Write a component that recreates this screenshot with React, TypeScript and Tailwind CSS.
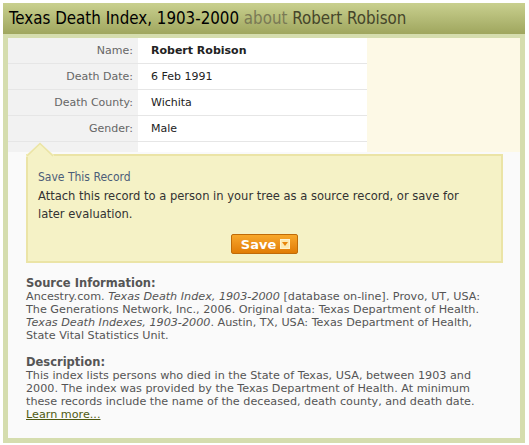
import React from "react";

const verdana = { fontFamily: '"DejaVu Sans", Verdana, sans-serif' };
const tahoma = { fontFamily: '"DejaVu Sans Condensed", Tahoma, "DejaVu Sans", sans-serif' };

function Row({ label, value, bold }: { label: string; value: string; bold?: boolean }) {
  return (
    <div className="flex h-[26px] border-b border-[#e6e6e6]">
      <div className="w-[130px] bg-[#f2f2f2] text-right pr-[5px] text-[#666] leading-[26px]">{label}</div>
      <div className={`w-[229px] bg-white pl-[13px] leading-[26px] text-[#222] ${bold ? "font-bold" : ""}`}>{value}</div>
    </div>
  );
}

export default function App() {
  return (
    <div className="w-[529px] h-[445px] bg-white pt-[3px] pl-[3px]">
      <div className="w-[522px] h-[440px] flex flex-col">
        <div
          className="h-[31px] bg-gradient-to-b from-[#c9d08f] to-[#9fa65e] pl-[6px] text-[16.8px] leading-[31px] whitespace-nowrap"
          style={tahoma}
        >
          <span className="text-black">Texas Death Index, 1903-2000</span>{" "}
          <span className="text-[#7a7a55]">about</span>{" "}
          <span className="text-[#45452a]">Robert Robison</span>
        </div>
        <div className="flex-1 border-x-[5px] border-b-[5px] border-t-[4px] border-[#d5ddae] bg-[#fafafa] text-[11px]" style={verdana}>
          <div className="flex bg-[#fdf9e6]">
            <div className="flex flex-col">
              <Row label="Name:" value="Robert Robison" bold />
              <Row label="Death Date:" value="6 Feb 1991" />
              <Row label="Death County:" value="Wichita" />
              <Row label="Gender:" value="Male" />
              <div className="flex h-[10px]">
                <div className="w-[130px] bg-[#f2f2f2]" />
                <div className="w-[229px] bg-white" />
              </div>
            </div>
          </div>
          <div className="relative ml-[18px] mt-[2px] w-[477px] h-[109px] border-2 border-[#ebe4a6] bg-[#f5f2c6] px-[10px] pt-[12px]">
            <svg className="absolute left-[-2px] top-[-14px]" width="30" height="15" viewBox="0 0 30 15">
              <path d="M0 15 L0 13 L14 1 L28 13 L28 15 Z" fill="#f5f2c6" />
              <path d="M1 14 L14 1.5 L27 14" fill="none" stroke="#ebe4a6" strokeWidth="1.5" />
            </svg>
            <div className="text-[12px] text-[#4c5d78] leading-[18px]" style={tahoma}>Save This Record</div>
            <div className="text-[12.8px] text-[#333] leading-[18px] mt-[1px] whitespace-nowrap" style={tahoma}>
              Attach this record to a person in your tree as a source record, or save for
              <br />
              later evaluation.
            </div>
            <div className="flex justify-center mt-[11px]">
              <button className="w-[67px] h-[20px] rounded-[2px] border border-[#c06b08] bg-gradient-to-b from-[#f8a82a] to-[#e17c02] text-white font-bold text-[13px] flex items-center justify-center gap-[4px] pl-[2px]" style={verdana}>
                <span className="leading-none">Save</span>
                <span className="w-[10px] h-[10px] bg-[#fde9b0] border border-[#fff3cf] flex items-center justify-center">
                  <svg width="6" height="4" viewBox="0 0 6 4"><path d="M0 0 L6 0 L3 4 Z" fill="#e8860c" /></svg>
                </span>
              </button>
            </div>
          </div>
          <div className="px-[18px] pt-[14px] text-[#555] leading-[13px] text-[11.2px] whitespace-nowrap">
            <div className="font-bold text-[11.5px]">Source Information:</div>
            <div>
              Ancestry.com. <i>Texas Death Index, 1903-2000</i> [database on-line]. Provo, UT, USA:
              <br />
              The Generations Network, Inc., 2006. Original data: Texas Department of Health.
              <br />
              <i>Texas Death Indexes, 1903-2000</i>. Austin, TX, USA: Texas Department of Health,
              <br />
              State Vital Statistics Unit.
            </div>
            <div className="font-bold text-[11.5px] mt-[14px]">Description:</div>
            <div>
              This index lists persons who died in the State of Texas, USA, between 1903 and
              <br />
              2000. The index was provided by the Texas Department of Health. At minimum
              <br />
              these records include the name of the deceased, death county, and death date.
            </div>
            <a className="text-[#4f5a12] underline">Learn more...</a>
          </div>
        </div>
      </div>
    </div>
  );
}
